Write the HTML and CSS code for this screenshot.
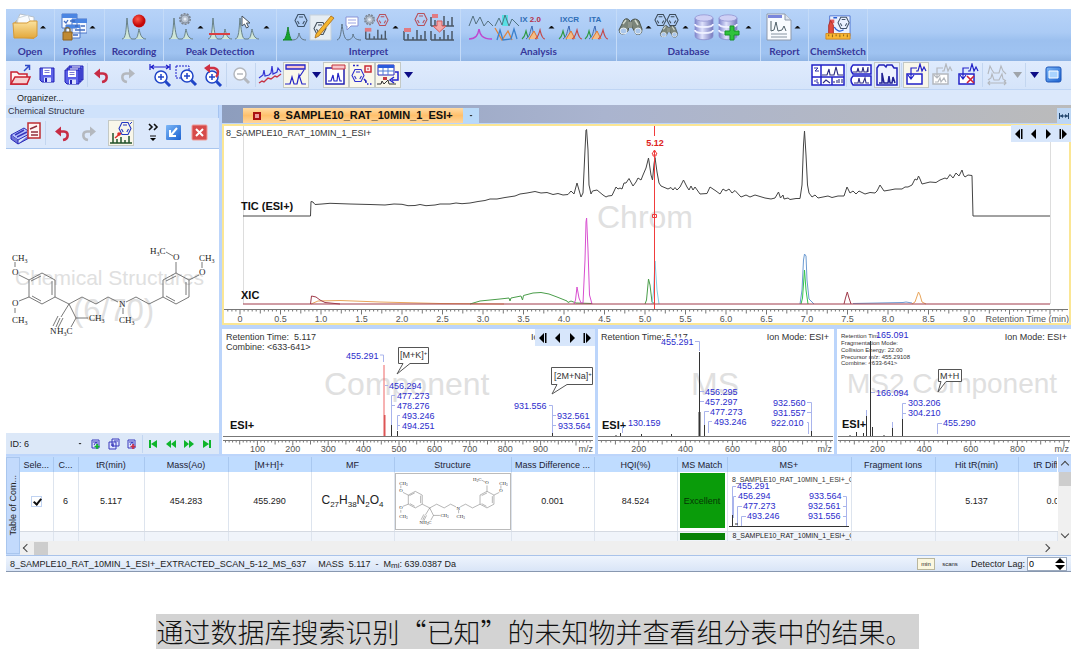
FILE: index.html
```html
<!DOCTYPE html>
<html lang="zh-CN">
<head>
<meta charset="utf-8">
<title>8_SAMPLE10_RAT_10MIN_1_ESI+</title>
<link rel="stylesheet" href="styles.css">
</head>
<body>
<svg class="sprite" aria-hidden="true">
  <defs>
    <linearGradient id="gFolder" x2="0" y2="1"><stop offset="0" stop-color="#fbe3a0"/><stop offset="1" stop-color="#e3a83c"/></linearGradient>
    <linearGradient id="gDb"><stop offset="0" stop-color="#7f85cc"/><stop offset=".4" stop-color="#dfe2fc"/><stop offset="1" stop-color="#7579bd"/></linearGradient>
    <radialGradient id="gRed" cx=".4" cy=".35"><stop offset="0" stop-color="#ff5a4a"/><stop offset="1" stop-color="#c40808"/></radialGradient>
    <linearGradient id="gBlue" x2="1" y2="1"><stop offset="0" stop-color="#7db8f8"/><stop offset="1" stop-color="#1c62d0"/></linearGradient>
    <g id="hex"><path d="M4 .5H10L13 6.500 10 12.500H4L1 6.500Z M5 3H9 M10.500 7L8.800 10 M3.500 7L5.200 10" fill="none" stroke="currentColor" stroke-width="1.100"/></g>
    <g id="gear"><circle cx="6" cy="6" r="5.200" fill="#aeb8c4" stroke="#7a8492" stroke-width="1.600" stroke-dasharray="2 1.200"/><circle cx="6" cy="6" r="4" fill="#b8c2d0" stroke="#8693a3"/><circle cx="6" cy="6" r="1.500" fill="#e6edf6"/></g>
    <g id="twopeaks"><path d="M0 24C4 24 4 14 5 3 6 14 7 24 10 24H13C16 23 16 18 17 14 18 18 19 24 24 24" fill="#cfe6d8" stroke="#5f777e" stroke-width=".9"/></g>
    <g id="bars"><path d="M1 11V2M1 11H24M5 11V5M10 11V8M14 11V1M18 11V6M22 11V2" fill="none" stroke="#4a5766" stroke-width="1.500"/></g>
    <g id="colorpeaks"><path d="M1 14C4 12 4 9 5 6 6 10 7 14 9 14" fill="none" stroke="#2f9a43" stroke-width="1.200"/><path d="M5 14C9 12 9 6 11 1 12 6 13 14 16 14" fill="#a9c4e8" stroke="#3a68b4"/><path d="M8 14L13 6 17 14" fill="#f3bd87" stroke="#e0762f"/><path d="M14 14C17 13 18 8 19 5 20 9 21 14 24 14" fill="none" stroke="#c2494a" stroke-width="1.200"/></g>
    <g id="binoc"><path d="M1 13L6 3Q9 0 12 4L10 14Q6 19 2 16Z M13 4Q17 0 21 4L24 12Q24 19 18 17L14 10Z" fill="#7b857a" stroke="#4c554f"/><path d="M10 5H14V11H10Z" fill="#8d958b"/><ellipse cx="5.500" cy="14" rx="3.500" ry="3" fill="#aac7ec" stroke="#e9eef0"/><ellipse cx="20" cy="14" rx="3.200" ry="3" fill="#aac7ec" stroke="#e9eef0"/><path d="M5 7L8 3M17 3L20 8" stroke="#d2d8cd" stroke-width="1.500"/></g>
    <g id="db"><path d="M1 4V22C1 27 19 27 19 22V4" fill="url(#gDb)" stroke="#8a8ecd" stroke-width=".8"/><ellipse cx="10" cy="4" rx="9" ry="3.200" fill="#cfd0f5" stroke="#9396d2" stroke-width=".8"/><path d="M1 10C1 14 19 14 19 10M1 16C1 20 19 20 19 16" fill="none" stroke="#eef0ff" stroke-width="2"/></g>
    <g id="lens"><circle cx="10" cy="10" r="6" fill="#fff" stroke="currentColor" stroke-width="1.500"/><path d="M14.500 14.500L19 19" stroke="currentColor" stroke-width="3"/><path d="M7 10H13" stroke="currentColor" stroke-width="1.500"/></g>
    <g id="undoarrow"><path d="M6 8.500H12C17 9 17 16 11 17" fill="none" stroke="currentColor" stroke-width="2.600"/><path d="M3 8.500L9 3.500V13.500Z" fill="currentColor"/></g>
    <g id="disk"><path d="M1 1H15V15H3L1 13Z" fill="#5c62e8" stroke="#2020b4"/><path d="M4 1.500H12V8H4Z" fill="#fff"/><path d="M5.500 3.500H10.500M5.500 5.500H10.500" stroke="#7c7cd4"/><path d="M5 10.500H12V15H5Z" fill="#dbe2ff"/><path d="M6 11H8V15H6Z" fill="#2323ae"/></g>
  </defs>
  <symbol id="i-folder" viewBox="0 0 26 28"><path d="M2 10V24L22 26 24 10 20 6H6Z" fill="#dc9e32"/><path d="M4 10L8 1 22 4 22 15Z" fill="#fff" stroke="#b3bfcc"/><path d="M6 5L16 2 20 14H5Z" fill="#f7fbff" stroke="#c9d3dd"/><path d="M1 10H15L18 8H25V23L22 25H2Z" fill="url(#gFolder)" stroke="#d59a39"/></symbol>
  <symbol id="i-profiles" viewBox="0 0 26 28"><path d="M1 1H16V15H1Z M11 6H26V20H11Z M5 12H19V25H5Z" fill="#f4f8ff" stroke="#4d77c8"/><path d="M1 1H16V5H1Z M11 6H26V10H11Z M5 12H19V15H5Z" fill="#4b85e2"/><path d="M3 8L5 10 7 7M9 8H14M14 13H17M20 13H24M14 17H24M12 22H17" fill="none" stroke="#406bc0" stroke-width="1.300"/><path d="M2 19H11V27H2Z" fill="#c08a32" stroke="#8d6220"/><path d="M4 19V16Q6.500 13 9 16V19" fill="none" stroke="#7e6b40" stroke-width="1.500"/></symbol>
  <symbol id="i-record" viewBox="0 0 26 28"><use href="#twopeaks" x="1" y="2"/><circle cx="18" cy="8" r="6.500" fill="url(#gRed)"/></symbol>
  <symbol id="i-peakgear" viewBox="0 0 26 28"><use href="#twopeaks" x="1" y="2"/><use href="#gear" x="11"/></symbol>
  <symbol id="i-peakbase" viewBox="0 0 26 28"><use href="#twopeaks" x="1" y="2"/><path d="M2 21H23" stroke="#d93f43" stroke-width="2"/></symbol>
  <symbol id="i-peakcursor" viewBox="0 0 26 28"><use href="#twopeaks" x="1" y="2"/><path d="M8 3V13L10.500 11 12.500 15 14.500 14 12.500 10H16Z" fill="#fff" stroke="#45505c"/></symbol>
  <symbol id="i-hexpeak" viewBox="0 0 26 28"><g color="#3e5268"><use href="#hex" x="12" y="1"/></g><path d="M1 27C4 26 5 20 6 14 7 20 8 26 10 27Z" fill="#15a42c" stroke="#168528"/><path d="M10 27C16 27 16 24 17 20 18 24 19 27 24 27" fill="none" stroke="#637783"/></symbol>
  <symbol id="i-edit" viewBox="0 0 26 28"><path d="M1 2H22V27H1Z" fill="#e6edf3" stroke="#c6d1db"/><g color="#45525e"><use href="#hex" x="4" y="9"/></g><path d="M7 21L22 3 25 5 10 23 6 25Z" fill="#f4b52d" stroke="#a66a19" stroke-width=".8"/></symbol>
  <symbol id="i-notepeak" viewBox="0 0 26 28"><path d="M10 4H22V13H15L11 17V13H10Z" fill="#fff" stroke="#8993d5"/><path d="M12 7H20M12 10H20" stroke="#9aa3e3"/><path d="M1 27C5 26 5 18 6 11 7 18 8 27 12 27 16 26 17 24 17 21 18 25 20 27 25 27" fill="none" stroke="#5e7384"/></symbol>
  <symbol id="i-gearhex" viewBox="0 0 28 28"><use href="#gear" x="1"/><g color="#b7505b"><use href="#hex" x="14" y="0"/></g><use href="#bars" x="2" y="16"/><path d="M2 15H9V19H2Z" fill="#e07b82"/></symbol>
  <symbol id="i-hexbars" viewBox="0 0 26 28"><g color="#b7505b"><use href="#hex" x="12" y="0"/></g><use href="#bars" x="1" y="16"/><path d="M2 15H9V19H2Z" fill="#e07b82"/></symbol>
  <symbol id="i-barsbars" viewBox="0 0 26 28"><use href="#bars" x="1" y="2"/><use href="#bars" x="1" y="16"/><path d="M3 1H9V5H3Z" fill="#e07b82"/><path d="M8 8H13V13H17L10.500 19 4 13H8Z" fill="#f3a8a8" stroke="#d7595b"/></symbol>
  <symbol id="i-an1" viewBox="0 0 26 28"><path d="M1 13L5 3 8 11 12 4 16 13 20 8 25 13" fill="none" stroke="#557080"/><path d="M1 26C8 26 10 22 11 16 12 22 14 26 24 26" fill="none" stroke="#bd48cf" stroke-width="1.500"/></symbol>
  <symbol id="i-an2" viewBox="0 0 26 28"><path d="M8 2H14V13H8Z" fill="#58e0e4"/><path d="M1 13L5 5 8 12 11 2 15 13 18 6 25 13" fill="none" stroke="#4f7582"/><path d="M1 15L8 27 14 18 18 27" fill="none" stroke="#e38438" stroke-width="1.300"/><path d="M3 27L6 17 9 27 17 26 20 16 23 26" fill="none" stroke="#3b80cc" stroke-width="1.300"/></symbol>
  <symbol id="i-binoc" viewBox="0 0 26 28"><use href="#binoc" x="1" y="4"/></symbol>
  <symbol id="i-hexbinoc" viewBox="0 0 28 28"><g color="#3b4957"><use href="#hex" x="0"/><use href="#hex" x="13"/></g><g transform="translate(6 11) scale(.8)"><use href="#binoc"/></g></symbol>
  <symbol id="i-db" viewBox="0 0 24 28"><use href="#db" x="2" y="1"/></symbol>
  <symbol id="i-dbadd" viewBox="0 0 26 28"><use href="#db" x="1" y="1"/><path d="M13 13H17V18H22V22H17V27H13V22H8V18H13Z" fill="#2fc33b" stroke="#16912a"/></symbol>
  <symbol id="i-report" viewBox="0 0 26 28"><path d="M1 1H19L25 7V27H1Z" fill="#f8fbff" stroke="#8e99ab"/><path d="M2 2H16V5H2Z" fill="#7a86dc"/><path d="M19 1V7H25" fill="#dbe3ee" stroke="#8e99ab"/><path d="M5 18V8M5 18L8 17 10 9 12 18 16 17 18 13 20 18" fill="none" stroke="#50616a"/><path d="M5 21H21M5 24H21" stroke="#bfc7d0" stroke-width="2"/></symbol>
  <symbol id="i-sketch" viewBox="0 0 28 28"><path d="M5 2H27V24H5Z" fill="#eaf1ff" stroke="#4e75d2"/><g color="#42536a"><use href="#hex" x="13" y="3"/></g><path d="M9 4H13M10 14Q14 21 20 17" fill="none" stroke="#275cd2" stroke-width="1.500"/><path d="M5 6H10V10H5Z" fill="#e45558"/><path d="M4 12L6 7 9 12V25H4Z" fill="#e14b40" stroke="#aa2c28"/><path d="M1 21H27V27H1Z" fill="#f8b732" stroke="#d18824"/><path d="M4 22V24M8 22V25M12 22V24M16 22V25M20 22V24M24 22V25" stroke="#845b1b"/></symbol>

  <symbol id="t-open" viewBox="0 0 24 24"><path d="M2 21V9H8L10 11H18V21Z" fill="#fff1f0" stroke="#ca2030" stroke-width="1.500"/><path d="M2 21L6 14H21L18 21Z" fill="#f6d1d3" stroke="#ca2030" stroke-width="1.500"/><path d="M15 8L20 3M16 2.500H20.500V7" fill="none" stroke="#2f4bc8" stroke-width="1.500"/></symbol>
  <symbol id="t-save" viewBox="0 0 24 24"><use href="#disk" x="4" y="4"/></symbol>
  <symbol id="t-saveall" viewBox="0 0 24 24"><use href="#disk" x="7" y="2"/><use href="#disk" x="5" y="4"/><use href="#disk" x="3" y="6"/></symbol>
  <symbol id="t-undo" viewBox="0 0 24 24"><use href="#undoarrow" x="1" y="2"/></symbol>
  <symbol id="t-redo" viewBox="0 0 24 24"><g transform="translate(22 2) scale(-1 1)"><use href="#undoarrow"/></g></symbol>
  <symbol id="t-zoomx" viewBox="0 0 24 24"><path d="M2 1V7M22 1V7M3 4H21M6 2L3 4 6 6M18 2L21 4 18 6" fill="none" stroke="#1e1ecb" stroke-width="1.200"/><g color="#1f45c7"><use href="#lens" x="3" y="4"/></g><path d="M13 11V17" stroke="#1f45c7" stroke-width="1.500"/></symbol>
  <symbol id="t-zoombox" viewBox="0 0 24 24"><path d="M2 3H15V15H2Z" fill="none" stroke="#1e1ecb" stroke-dasharray="2 1"/><g color="#1f45c7"><use href="#lens" x="3" y="3"/></g><path d="M13 10V16" stroke="#1f45c7" stroke-width="1.500"/></symbol>
  <symbol id="t-zoomundo" viewBox="0 0 24 24"><g color="#1f45c7"><use href="#lens" x="2" y="4"/></g><path d="M12 11V17" stroke="#1f45c7" stroke-width="1.500"/><path d="M9 5H14C19 6 19 11 16 14" fill="none" stroke="#cf3143" stroke-width="2.400"/><path d="M4 5L10 1V10Z" fill="#cf3143"/></symbol>
  <symbol id="t-zoomout" viewBox="0 0 24 24"><use href="#lens" x="1" y="1"/></symbol>
  <symbol id="t-lines" viewBox="0 0 24 24"><path d="M1 15L5 12 6 7 7 13 11 12 13 10 14 3 15 11 19 9 20 5 23 9" fill="none" stroke="#3434d4" stroke-width="1.200"/><path d="M1 20L4 18 6 19 10 15 13 16 17 13 19 14 23 11" fill="none" stroke="#c63245" stroke-width="1.400"/></symbol>
  <symbol id="t-label" viewBox="0 0 24 24"><path d="M2 2H21V6H2Z" fill="#f7c6cb" stroke="#2525c7" stroke-width="1.300"/><path d="M20 7L16 13M1 21H6L8 14 10 21H13L15 12 18 21H22" fill="none" stroke="#2525c7" stroke-width="1.200"/></symbol>
  <symbol id="t-panel" viewBox="0 0 24 24"><path d="M2 5H20V21H2Z" fill="#fff" stroke="#2222b2" stroke-width="1.500"/><path d="M8 2H21V6H8Z" fill="#f7c6cb" stroke="#c2333f"/><path d="M4 18H7L9 12 10 18H13L14 10 16 18H18" fill="none" stroke="#2525c7" stroke-width="1.200"/></symbol>
  <symbol id="t-hex" viewBox="0 0 24 24"><g color="#2f2fd0"><use href="#hex" x="1" y="6"/></g><path d="M3 2.500H5M6.500 2.500H8.500M14 16L16 18V20M17 21H18.500M20 21H21.500" stroke="#2525c7" stroke-width="1.500"/><path d="M15 3H21V9H15Z" fill="#fbe8e8" stroke="#c92b36" stroke-width="1.500"/><path d="M17 6H19" stroke="#c92b36"/></symbol>
  <symbol id="t-table" viewBox="0 0 24 24"><path d="M2 2H18V12H2Z" fill="#fff" stroke="#2828bb"/><path d="M2 2H18V5H2Z" fill="#2a5bdc"/><path d="M2 8H18M7 5V12M12 5V12" stroke="#4f7cd7"/><path d="M19 9H22V17H16M18 14L14 17 18 20" fill="none" stroke="#2222d0" stroke-width="1.500"/><path d="M7 14H11V17H7Z" fill="#c83d44"/><path d="M1 21H5L6 18 8 21 12 17 13 21H20" fill="none" stroke="#333"/></symbol>
  <symbol id="t-layout" viewBox="0 0 34 24"><path d="M1 2H33V22H1Z M1 14H33M10 2V22M21 14V22" fill="#fff" stroke="#2222c8" stroke-width="1.500"/><path d="M3 5H7L4 8H8M3 18H5M6 16V20H8" fill="none" stroke="#3030a8"/><path d="M11 12H16L18 6 19 12H23L25 4 27 12H32M12 20L15 17 19 20M23 20V18M26 20V17M28 20V16M31 20V16" fill="none" stroke="#2c2c80" stroke-width="1.100"/></symbol>
  <symbol id="t-stack" viewBox="0 0 24 24"><path d="M4 2H22V11H4Q0 6 4 2Z M4 13H22V22H4Q0 17 4 13Z" fill="#fff" stroke="#2222c8" stroke-width="1.500"/><path d="M4 9H8L9 5 10 9H13L14 4 15 9H18L19 4V9M5 20H9L10 15 11 20H14L16 15 17 20H20" fill="none" stroke="#2c2c80" stroke-width="1.100"/></symbol>
  <symbol id="t-tabs" viewBox="0 0 24 24"><path d="M2 5L4 2H9L11 4 12 2H17L19 5H22V22H2Z" fill="#eef2ff" stroke="#2222b8" stroke-width="1.500"/><path d="M4 20H7V10L9 20H13L14 13 15 20H17L18 14 20 20" fill="none" stroke="#222294" stroke-width="1.500"/></symbol>
  <symbol id="t-addpk" viewBox="0 0 24 24"><path d="M3 11H18V21H3Z" fill="#fff" stroke="currentColor" stroke-width="1.500"/><path d="M13 5H7V15M4 12L7 16 10 12M12 8H14L16 1 18 8 20 4 22 8" fill="none" stroke="currentColor" stroke-width="1.200"/></symbol>
  <symbol id="t-addpk2" viewBox="0 0 24 24"><path d="M3 11H18V21H3Z" fill="#fff" stroke="currentColor" stroke-width="1.500"/><path d="M13 5H7V14M4 12L7 15 10 12M12 8H14L16 1 18 8 20 4 22 8M5 19H8L10 15 11 19 14 15 16 19" fill="none" stroke="currentColor" stroke-width="1.200"/></symbol>
  <symbol id="t-delpk" viewBox="0 0 24 24"><use href="#t-addpk" width="24" height="24"/><path d="M11 13L18 20M18 13L11 20" stroke="#d02337" stroke-width="1.600"/></symbol>
  <symbol id="t-range" viewBox="0 0 24 24"><path d="M3 11L5 3 7 7 9 10 14 10 16 3 18 8 21 11M3 17L6 15 7 11 9 17H14L17 11 18 16 21 18M3 20H21M5 18L3 20 5 22M19 18L21 20 19 22" fill="none" stroke="currentColor" stroke-width="1.100"/></symbol>
  <symbol id="t-window" viewBox="0 0 24 24"><rect x="4" y="4" width="15" height="15" rx="2" fill="url(#gBlue)" stroke="#1b55b8"/><path d="M7 8H16V15H7Z" fill="#a9d4ff" stroke="#fff"/></symbol>
  <symbol id="t-report" viewBox="0 0 32 24"><path d="M1 14L14 7 21 12 8 19Z" fill="#b9c4ff" stroke="#2929b8"/><path d="M1 14V18L8 23V19M8 23L21 16V12" fill="#7075d7" stroke="#2929b8"/><path d="M5 14L14 9M7 16L17 11" stroke="#3838bb" stroke-width="1.500"/><path d="M18 2H30V17H18Z" fill="#fff4f3" stroke="#be2c32" stroke-width="1.500"/><path d="M20 8L27 5M21 11H28M21 14H28" stroke="#912e3c" stroke-width="1.500"/></symbol>
  <symbol id="t-struct" viewBox="0 0 24 24"><g color="#2437c2"><use href="#hex" x="9" y="1"/></g><path d="M21 3L23 1" stroke="#2437c2"/><path d="M12 12L6 17" stroke="#df2e29" stroke-width="1.500"/><circle cx="10" cy="13" r="1.800" fill="#df2e29"/><path d="M1 22H23M4 22V12M8 22V18M12 22V16M16 22V19M20 22V15" stroke="#22532a" stroke-width="1.500"/></symbol>
  <symbol id="t-more" viewBox="0 0 14 24"><path d="M3 3L6 6 3 9M8 3L11 6 8 9" fill="none" stroke="#111" stroke-width="1.600"/><path d="M4 15H10" stroke="#111"/><path d="M4 17H10L7 20Z"/></symbol>
  <symbol id="t-dock" viewBox="0 0 20 20"><rect x="2" y="2" width="15" height="15" rx="1" fill="url(#gBlue)"/><path d="M13 5L7 12M6 7V13H12" fill="none" stroke="#fff" stroke-width="2"/></symbol>
  <symbol id="t-close" viewBox="0 0 20 20"><rect x="2" y="2" width="15" height="15" rx="1" fill="#d64b4b" stroke="#ef9b98"/><path d="M6 6L13 13M13 6L6 13" stroke="#fff" stroke-width="2"/></symbol>
  <symbol id="f-rec" viewBox="0 0 12 12"><path d="M2 2H9V10H2Z" fill="#dfe6ff" stroke="#3838bb"/><path d="M3 4H8M4 7L6 4 8 7" fill="none" stroke="#3838bb"/><path d="M7 6V11M4.500 8.500H9.500" stroke="currentColor" stroke-width="1.700"/></symbol>
  <symbol id="f-recs" viewBox="0 0 12 12"><path d="M4 1H11V8H4Z M1 4H8V11H1Z" fill="#dfe6ff" stroke="#3838bb"/><path d="M3 7H6M5 5V9M6 3H10" stroke="#3838bb"/></symbol>
  <symbol id="n-first" viewBox="0 0 12 12"><path d="M2 2H4V10H2Z M4 6L10 2V10Z" fill="currentColor"/></symbol>
  <symbol id="n-back" viewBox="0 0 12 12"><path d="M1 6L6 2V10Z M6 6L11 2V10Z" fill="currentColor"/></symbol>
  <symbol id="n-fwd" viewBox="0 0 12 12"><path d="M11 6L6 2V10Z M6 6L1 2V10Z" fill="currentColor"/></symbol>
  <symbol id="n-last" viewBox="0 0 12 12"><path d="M8 2H10V10H8Z M8 6L2 2V10Z" fill="currentColor"/></symbol>
  <symbol id="c-first" viewBox="0 0 12 12"><path d="M2 6L7 1V11Z M8 1H9.500V11H8Z"/></symbol>
  <symbol id="c-prev" viewBox="0 0 12 12"><path d="M3 6L8 1V11Z"/></symbol>
  <symbol id="c-next" viewBox="0 0 12 12"><path d="M9 6L4 1V11Z"/></symbol>
  <symbol id="c-last" viewBox="0 0 12 12"><path d="M10 6L5 1V11Z M2.500 1H4V11H2.500Z"/></symbol>
</svg>

<main class="app">
  <nav class="ribbon" aria-label="Ribbon">
    <section class="group g-open"><div class="icons"><button aria-label="Open"><svg><use href="#i-folder"/></svg></button><i class="up"></i></div><span>Open</span></section>
    <section class="group g-profiles"><div class="icons"><button aria-label="Profiles"><svg><use href="#i-profiles"/></svg></button><i class="up"></i></div><span>Profiles</span></section>
    <section class="group g-record"><div class="icons"><button aria-label="Recording"><svg><use href="#i-record"/></svg></button></div><span>Recording</span></section>
    <section class="group g-peak"><div class="icons"><button aria-label="Peak options"><svg><use href="#i-peakgear"/></svg></button><i class="up"></i><button aria-label="Peak baseline"><svg><use href="#i-peakbase"/></svg></button><button aria-label="Pick peak"><svg><use href="#i-peakcursor"/></svg></button><i class="up"></i></div><span>Peak Detection</span></section>
    <section class="group g-interpret"><div class="icons"><button aria-label="Structure peak"><svg><use href="#i-hexpeak"/></svg></button><button aria-label="Edit structure"><svg><use href="#i-edit"/></svg></button><button aria-label="Annotate"><svg><use href="#i-notepeak"/></svg></button><button aria-label="Assign"><svg><use href="#i-gearhex"/></svg></button><i class="up"></i><button aria-label="Fragments"><svg><use href="#i-hexbars"/></svg></button><button aria-label="Compare"><svg><use href="#i-barsbars"/></svg></button></div><span>Interpret</span></section>
    <section class="group g-analysis"><div class="icons"><button aria-label="Extract"><svg><use href="#i-an1"/></svg></button><button aria-label="Deconvolve"><svg><use href="#i-an2"/></svg></button><button aria-label="IX 2.0"><svg viewBox="0 0 26 28"><text x="0" y="9" class="ico-text">IX <tspan fill="#b42f4b">2.0</tspan></text><use href="#colorpeaks" x="1" y="12"/></svg></button><i class="up"></i><button aria-label="IXCR"><svg viewBox="0 0 26 28"><text x="3" y="9" class="ico-text">IXCR</text><use href="#colorpeaks" x="1" y="12"/></svg></button><button aria-label="ITA"><svg viewBox="0 0 26 28"><text x="6" y="9" class="ico-text">ITA</text><use href="#colorpeaks" x="1" y="12"/></svg></button></div><span>Analysis</span></section>
    <section class="group g-database"><div class="icons"><button aria-label="Search"><svg><use href="#i-binoc"/></svg></button><i class="up"></i><button aria-label="Structure search"><svg><use href="#i-hexbinoc"/></svg></button><i class="up"></i><button aria-label="Database"><svg><use href="#i-db"/></svg></button><button aria-label="Add to database"><svg><use href="#i-dbadd"/></svg></button><i class="up"></i></div><span>Database</span></section>
    <section class="group g-report"><div class="icons"><button aria-label="Report"><svg><use href="#i-report"/></svg></button><i class="up"></i></div><span>Report</span></section>
    <section class="group g-sketch"><div class="icons"><button aria-label="ChemSketch"><svg><use href="#i-sketch"/></svg></button></div><span>ChemSketch</span></section>
  </nav>

  <div class="toolbar">
    <button aria-label="Open file"><svg><use href="#t-open"/></svg></button><button aria-label="Save"><svg><use href="#t-save"/></svg></button><button aria-label="Save all"><svg><use href="#t-saveall"/></svg></button><i class="sep"></i>
    <button class="red" aria-label="Undo"><svg><use href="#t-undo"/></svg></button><button class="gray" aria-label="Redo"><svg><use href="#t-redo"/></svg></button><i class="space"></i>
    <button aria-label="Zoom X"><svg><use href="#t-zoomx"/></svg></button><button aria-label="Zoom box"><svg><use href="#t-zoombox"/></svg></button><button aria-label="Undo zoom"><svg><use href="#t-zoomundo"/></svg></button><i class="sep"></i>
    <button class="gray" aria-label="Zoom out"><svg><use href="#t-zoomout"/></svg></button><i class="sep"></i>
    <button aria-label="Overlay"><svg><use href="#t-lines"/></svg></button><button class="on" aria-label="Labels"><svg><use href="#t-label"/></svg></button><i class="down"></i>
    <button class="on" aria-label="Panel"><svg><use href="#t-panel"/></svg></button><button class="on" aria-label="Structures"><svg><use href="#t-hex"/></svg></button><button class="on" aria-label="Table link"><svg><use href="#t-table"/></svg></button><i class="down"></i>
    <i class="fill"></i>
    <button class="wide" aria-label="Layout"><svg><use href="#t-layout"/></svg></button><i class="sep"></i>
    <button aria-label="Stack"><svg><use href="#t-stack"/></svg></button><button class="on pale" aria-label="Tabs"><svg><use href="#t-tabs"/></svg></button><i class="sep"></i>
    <button class="on blue" aria-label="Add peak"><svg><use href="#t-addpk"/></svg></button><button class="gray" aria-label="Add spectrum"><svg><use href="#t-addpk2"/></svg></button><button class="blue" aria-label="Delete peak"><svg><use href="#t-delpk"/></svg></button><i class="sep"></i>
    <button class="gray" aria-label="Range"><svg><use href="#t-range"/></svg></button><i class="down off"></i><i class="sep"></i><i class="down"></i><button aria-label="Window"><svg><use href="#t-window"/></svg></button>
  </div>
  <div class="organizer">Organizer...</div>

  <div class="work">
    <aside class="left">
      <h2 class="panel-title">Chemical Structure</h2>
      <div class="struct-tools">
        <button class="wide" aria-label="Report structure"><svg><use href="#t-report"/></svg></button><i class="sep"></i>
        <button class="red" aria-label="Undo structure"><svg><use href="#t-undo"/></svg></button><button class="gray" aria-label="Redo structure"><svg><use href="#t-redo"/></svg></button><i class="space"></i>
        <button class="on" aria-label="Structure to peak"><svg><use href="#t-struct"/></svg></button><i class="fill"></i>
        <button class="narrow" aria-label="More"><svg><use href="#t-more"/></svg></button><button aria-label="Dock"><svg class="s20"><use href="#t-dock"/></svg></button><button aria-label="Close"><svg class="s20"><use href="#t-close"/></svg></button>
      </div>
      <svg class="plot" viewBox="6 149 213 284" role="img" aria-label="Chemical structure">
        <text class="mark" x="15" y="285" font-size="21">Chemical Structures</text>
        <text class="mark" x="73" y="321" font-size="31">(6/70)</text>
        <g id="molecule">
          <path fill="none" stroke="#555" stroke-width=".8" d="M42 273L55 280 55 297 42 304 29 297 29 280ZM41 276L31 281M52 281V295M41 301L32 296M29 280L19 275M15 267V262M29 297L19 301M15 308V313M55 297L69 304 82 297 96 304 108 297 118 302M123 308V314M126 302L136 297 149 304 163 297M69 304L76 318 88 318M76 318L71 327M69 304L61 317M58 316L53 326M60 318L56 327M63 318L58 328M163 280L176 273 189 280 189 297 176 304 163 297ZM166 281L176 276M186 282V295M175 301L166 296M176 273V262M173 256L166 252M189 280L199 275M202 268V262"/>
          <g class="atoms">
            <text x="12" y="261">CH<tspan class="sub" dy="2">3</tspan></text><text x="12" y="275">O</text><text x="12" y="306">O</text><text x="12" y="323">CH<tspan class="sub" dy="2">3</tspan></text>
            <text x="119" y="307">N</text><text x="119" y="323">CH<tspan class="sub" dy="2">3</tspan></text>
            <text x="89" y="321">CH<tspan class="sub" dy="2">3</tspan></text><text x="50" y="334">N</text><text x="57" y="334">H<tspan class="sub" dy="2">3</tspan><tspan dy="-2">C</tspan></text>
            <text x="150" y="254">H<tspan class="sub" dy="2">3</tspan><tspan dy="-2">C</tspan></text><text x="173" y="260">O</text><text x="199" y="261">CH<tspan class="sub" dy="2">3</tspan></text><text x="199" y="275">O</text>
          </g>
        </g>
      </svg>
      <div class="pager">
        <label class="record">ID: <select aria-label="Record"><option>6</option></select></label><i class="mini"></i>
        <button class="green" aria-label="Add record"><svg><use href="#f-rec"/></svg></button><button aria-label="Records"><svg><use href="#f-recs"/></svg></button><button class="red" aria-label="Remove record"><svg><use href="#f-rec"/></svg></button><i class="sep"></i>
        <button class="green" aria-label="First"><svg><use href="#n-first"/></svg></button><button class="green" aria-label="Back"><svg><use href="#n-back"/></svg></button><button class="green" aria-label="Forward"><svg><use href="#n-fwd"/></svg></button><button class="green" aria-label="Last"><svg><use href="#n-last"/></svg></button>
      </div>
    </aside>

    <section class="right">
      <div class="tabs">
        <button class="tab"><i class="tab-ico"></i>8_SAMPLE10_RAT_10MIN_1_ESI+</button><button class="tab-menu" aria-label="Tab list"><i class="mini"></i></button>
        <i class="fill"></i>
        <button class="fit" aria-label="Fit"><svg viewBox="0 0 14 14"><path d="M2.500 4V10M11.500 4V10M3 7H11" fill="none" stroke="#23466e"/><path d="M3 7L6 5V9ZM11 7L8 5V9Z" fill="#23466e"/></svg></button>
      </div>
      <div class="chrom">
        <svg class="plot" viewBox="224 126 845 197" role="img" aria-label="Chromatogram">
          <text class="mark" x="597" y="228" font-size="32">Chrom</text>
          <path d="M243.500 126V304M1050.500 126V304" stroke="#ddd" fill="none"/>
          <text x="226" y="136">8_SAMPLE10_RAT_10MIN_1_ESI+</text>
          <g class="trace">
            <path stroke="#444" d="M243 216H310.500L311 201.500 313 202 315 204.500 322 204 330 203.300 350 204 370 204.500 385 205 394 204 402 204.300 408 205.700 415 205.500 420 204.500 426 205.700 435 205 440 204 450 204 456 203 462 203.700 470 203 478 201.500 485 200.500 490 199 497 199 505 197.500 515 196 520 194 527 193 535 191.500 541 193 547 192.500 553 194.500 558 193.500 563 195 568 194.500 571 191 574 194 577 183 579 190 581 197 583 193 585 150 586 130 586.600 129.500 588 150 589 185 591 194 592.500 191 597 190 603 195 606 197 608 196 612 195.500 616 187 618 189 620 188 622 189 624 183 626 183 629 178.500 633 186 636 182 638 178 641 180 643 175 646 168 648.500 158 651 175 652.500 180 654 164 655 157.500 657 172 659 183 661 186 668 189 671 187.500 673 190 675 187.500 677 190 680 187 683.500 180 687 187 689 190 691 186 693 190 695 187 700 194 707 193.500 710 187 716 191 720 194 723 189 726 191 729 189 732 193 735 190.500 741 197 746 195 750 197 755 195 765 198 771 199 775 198 778.500 192 780.500 198 783 195 784 199 788 198 790 199.500 796 198.500 800 198.500 802 185 803.500 145 804.500 131 806 155 807.500 185 809 193 812 197 815 195 818 198 828 196 832 197.500 838 196 844 196 847 187 850 193 853 191 856 194 859 191 865 194 870 192.500 875 193 877 191 880 185 884 191 890 190 895 189 902 189 905 187 908 187 912 185 915 179 917 180 918.500 176 920 179 922 184 930 182 936 182.500 940 180 945 178 947 179 950 174.500 953 178 956 173 959 176 962 170 963.500 175 965 177 968 175 972 175.500 973 216H1050"/>
            <path stroke="#e9a55a" d="M311 304L318 301 340 300.500 380 302 440 303.500 504 304M912 304L915 302 918.500 292 920 295 922 302 926 304"/>
            <path stroke="#4a9d4a" d="M470 304L480 301 500 299 509 298 510 301 511 298 521 296 522.500 300 523.500 295.500 533 293 541 292.500 549 294 557 297 567 301 568 302.500 571 301 576 303 592 303.500M645 304L646.500 300 648.500 279 650 285 652 302 655 304"/>
            <path stroke="#d84fd0" d="M574 304L575.500 300 577 287 579 298 581 303H583L585 260 586 222 586.600 218 588 250 589.500 295 592 304"/>
            <path stroke="#86cde4" d="M652 304L653.500 292 655 261 657 290 659 304"/>
            <path stroke="#6c9bd2" d="M800 304L802 290 803.500 260 804.500 254 806 256 807 280 809 299 814 304M853 303.500L903 302.500 906 302 912 303"/>
            <path stroke="#31c44d" d="M801 304L802.500 298 804.500 270 806 290 808 304"/>
            <path stroke="#a03a4a" d="M243 304H1050M310.500 304L311.500 296 316 297 320 300 325 302.500 340 304M844 304L845.500 298 847.300 292 849 298 851 304"/>
          </g>
          <g class="axis" data-axis="chrom"></g>
          <path class="cursor" d="M654.500 126V136M654.500 150V309"/>
          <path class="cursor" d="M654.500 150L657 154H656V156H653V154H652ZM652.500 214.500H656.500V217.500H652.500Z"/>
          <text class="red-label" x="655" y="146" text-anchor="middle">5.12</text>
          <text class="bold" x="241" y="210">TIC (ESI+)</text><text class="bold" x="241" y="299">XIC</text>
          <text class="scale" x="1069" y="322" text-anchor="end">Retention Time (min)</text>
        </svg>
        <div class="steps"><button aria-label="First peak"><svg><use href="#c-first"/></svg></button><button aria-label="Previous peak"><svg><use href="#c-prev"/></svg></button><button aria-label="Next peak"><svg><use href="#c-next"/></svg></button><button aria-label="Last peak"><svg><use href="#c-last"/></svg></button></div>
      </div>

      <div class="spectra">
        <div class="spectrum">
          <svg class="plot" viewBox="222 329 373 125" role="img" aria-label="Component spectrum">
            <text class="mark" x="324" y="395" font-size="32">Component</text>
            <text x="226" y="340">Retention Time:&#160; 5.117</text><text x="226" y="350">Combine: &lt;633-641&gt;</text><text x="531" y="340">Ion</text>
            <text class="bold" x="230" y="429">ESI+</text>
            <g class="leader"><path d="M380 355H383.500V362M385 385.500H388M391.500 433V395.500H395M391.500 405.500H395M397.500 430V415.500H400M397.500 425.500H400M549 405.500H552.500V433M552 415.500H556M552 425.500H556"/></g>
            <path d="M384 365V415" stroke="#e66"/><path d="M384.500 415V436" stroke="#d55" stroke-width="2"/><path d="M391.500 425V436M397.500 431V436M552.500 433V436" stroke="#333"/>
            <g class="peak"><text x="346" y="359">455.291</text><text x="389" y="389">456.294</text><text x="397" y="399">477.273</text><text x="397" y="409">478.276</text><text x="402" y="419">493.246</text><text x="402" y="429">494.251</text><text x="514" y="409">931.556</text><text x="557" y="419">932.561</text><text x="558" y="429">933.564</text></g>
            <g class="callout"><path d="M398.500 347.500H428.500V363.500H410L397 374 403 363.500H398.500Z"/><path d="M551.500 367.500H592.500V384.500H567L552 394 557 384.500H551.500Z"/></g>
            <text x="400" y="358">[M+K]<tspan class="sub" dy="-3">+</tspan></text><text x="554" y="379">[2M+Na]<tspan class="sub" dy="-3">+</tspan></text>
            <g class="axis" data-axis="component"></g><text class="scale" x="593" y="452" text-anchor="end">m/z</text>
          </svg>
          <div class="steps"><button aria-label="First component"><svg><use href="#c-first"/></svg></button><button aria-label="Previous component"><svg><use href="#c-prev"/></svg></button><button aria-label="Next component"><svg><use href="#c-next"/></svg></button><button aria-label="Last component"><svg><use href="#c-last"/></svg></button></div>
        </div>
        <div class="spectrum">
          <svg class="plot" viewBox="598 329 236 125" role="img" aria-label="MS spectrum">
            <text class="mark" x="691" y="395" font-size="32">MS</text>
            <text x="601" y="340">Retention Time:</text><text x="666" y="340">5.117</text><path d="M663 337.500H694V346H663Z" fill="#fff"/><text x="829" y="340" text-anchor="end">Ion Mode: ESI+</text>
            <text class="bold" x="602" y="429">ESI+</text>
            <g class="leader"><path d="M695 341.500H699.500V351M700 391.500H704M700 401.500H704M704.500 430V411.500H709M708.500 433V421.500H712M807 402.500H811.500V434M807 412.500H811M807 422.500H808.500V434M622.500 433V426"/></g>
            <path d="M699.500 352V436M704.500 425V436M811.500 431V436M620.500 433V436M616 435V436M641.500 434V436M671.500 434V436" stroke="#333"/><path d="M699.500 412V436" stroke="#333" stroke-width="2"/>
            <g class="peak"><text x="661" y="345">455.291</text><text x="705" y="395">456.295</text><text x="705" y="405">457.297</text><text x="710" y="415">477.273</text><text x="714" y="425">493.246</text><text x="773" y="406">932.560</text><text x="773" y="416">931.557</text><text x="771" y="426">922.010</text><text x="628" y="426">130.159</text></g>
            <g class="axis" data-axis="ms"></g><text class="scale" x="832" y="452" text-anchor="end">m/z</text>
          </svg>
        </div>
        <div class="spectrum">
          <svg class="plot" viewBox="837 329 234 125" role="img" aria-label="MS2 component spectrum">
            <text class="mark" x="847" y="393" font-size="28">MS2 Component</text>
            <g class="tiny"><text x="841" y="338">Retention Tim</text><text x="841" y="345">Fragmentation Mode:</text><text x="841" y="352">Collision Energy: 22.00</text><text x="841" y="359">Precursor m/z: 455.29108</text><text x="841" y="365">Combine: &lt;633-641&gt;</text></g>
            <text x="1067" y="340" text-anchor="end">Ion Mode: ESI+</text><text class="bold" x="842" y="428">ESI+</text>
            <g class="leader"><path d="M871 392.500H875M902.500 420V403.500H906M902.500 413.500H906M937.500 434V423.500H942M892.500 430V422M866.500 416V410"/></g>
            <path d="M870.500 341V436M866.500 416V436M892.500 428V436M902.500 419V436M856.500 432V436M863.500 433V436M850 435V436M884 435V436M872.500 427V436" stroke="#333"/>
            <g class="peak"><text x="876" y="338">165.091</text><text x="876" y="396">166.094</text><text x="908" y="406">303.206</text><text x="908" y="416">304.210</text><text x="943" y="426">455.290</text></g>
            <g class="callout"><path d="M938.500 369.500H961.500V381.500H946L938 392 941 381.500H938.500Z"/></g><text x="940" y="379">M+H</text>
            <g class="axis" data-axis="ms2"></g><text class="scale" x="1069" y="452" text-anchor="end">m/z</text>
          </svg>
        </div>
      </div>
    </section>
  </div>

  <section class="components">
    <h2 class="side"><span>Table of Com...</span></h2>
    <div class="grid-wrap">
      <div class="grid-view">
        <table>
          <colgroup><col class="w33"><col class="w25"><col class="w66"><col class="w84"><col class="w83"><col class="w83"><col class="w117"><col class="w83"><col class="w83"><col class="w50"><col class="w124"><col class="w84"><col class="w83"><col class="w39"></colgroup>
          <thead><tr><th>Sele...</th><th>C...</th><th>tR(min)</th><th>Mass(Ao)</th><th>[M+H]+</th><th>MF</th><th>Structure</th><th>Mass Difference ...</th><th>HQI(%)</th><th>MS Match</th><th>MS+</th><th>Fragment Ions</th><th>Hit tR(min)</th><th class="cut">tR Diff</th></tr></thead>
          <tbody>
            <tr><td><input type="checkbox" checked aria-label="Select component 6"></td><td>6</td><td>5.117</td><td>454.283</td><td>455.290</td><td class="formula">C<sub>27</sub>H<sub>38</sub>N<sub>2</sub>O<sub>4</sub></td><td class="thumb"><svg viewBox="6 245 213 94"><use href="#molecule"/></svg></td><td>0.001</td><td>84.524</td><td class="match"><span>Excellent</span></td>
              <td class="ms"><svg class="plot" viewBox="728 474 123 57" role="img" aria-label="MS+ preview"><text class="head" x="732" y="484">8_SAMPLE10_RAT_10MIN_1_ESI+_C</text><g class="leader"><path d="M736 488.500H732.500V528M736 498.500H733.500V520M742 508.500H737.500V528M746 518.500H741.500V528M843 498.500H846.500V528M843 508.500H846M843 518.500H846"/></g><path d="M729 528.500H849M732.500 517V528M735 526H738" stroke="#333" fill="none"/><g class="peak"><text x="737" y="491">455.291</text><text x="738" y="501">456.294</text><text x="743" y="511">477.273</text><text x="747" y="521">493.246</text><text x="809" y="501">933.564</text><text x="808" y="511">932.561</text><text x="808" y="521">931.556</text></g></svg></td>
              <td></td><td>5.137</td><td class="cut far">0.0</td></tr>
            <tr class="next"><td></td><td></td><td></td><td></td><td></td><td></td><td></td><td></td><td></td><td class="match"><span></span></td><td class="peek">8_SAMPLE10_RAT_10MIN_1_ESI+_C</td><td></td><td></td><td></td></tr>
          </tbody>
        </table>
        <div class="vbar"><i class="chev up-chev"></i><i class="thumb-v"></i><i class="fill"></i><i class="chev down-chev"></i></div>
      </div>
      <div class="hbar"><i class="chev left-chev"></i><i class="thumb-h"></i><i class="fill"></i><i class="chev right-chev"></i></div>
    </div>
  </section>

  <footer class="status">
    <span>8_SAMPLE10_RAT_10MIN_1_ESI+_EXTRACTED_SCAN_5-12_MS_637</span><span>MASS&#160; 5.117&#160; -&#160; M<sub>mi</sub>: 639.0387 Da</span><i class="fill"></i>
    <button class="unit active">min</button><button class="unit">scans</button>
    <label for="lag">Detector Lag:</label><span class="spin"><input id="lag" value="0"><svg viewBox="0 0 10 12"><path d="M0 5L5 0 10 5ZM0 7H10L5 12Z"/></svg></span>
  </footer>
</main>
<p class="caption"><span>通过数据库搜索识别“已知”的未知物并查看组分表中的结果。</span></p>
<script src="axes.js"></script>
</body>
</html>
```
FILE: styles.css
```css
* { box-sizing: border-box; }
body { margin: 0; padding: 9px 9px 0 6px; background: #fff; font: 9px/12px "Liberation Sans", Arial, sans-serif; color: #222; }
.sprite { position: absolute; width: 0; height: 0; }
button { display: flex; align-items: center; justify-content: center; margin: 0; padding: 0; border: 0; background: none; font: inherit; color: inherit; }
i { display: block; flex: none; }
h2 { margin: 0; font: inherit; }
.fill { flex: 1; }
.app { background: #bcd5fb; }

.ribbon { display: flex; height: 52px; background: linear-gradient(#b7d3f8 0, #abcbf5 45%, #9cc0ef 60%, #9fc3f1 85%, #8fb4e4 100%); }
.group { display: flex; flex-direction: column; align-items: center; justify-content: space-between; padding: 3px 0 3px; border-right: 1px solid #c4dbf8; color: #37379a; font: bold 10px/14px Lato, "Open Sans", sans-serif; white-space: nowrap; }
.group .icons { display: flex; align-items: center; height: 30px; }
.group button, .group svg { width: 26px; height: 28px; }
.g-open { width: 49px; } .g-profiles { width: 50px; } .g-record { width: 59px; } .g-peak { width: 113px; }
.g-interpret { width: 184px; } .g-analysis { width: 156px; } .g-database { width: 144px; } .g-report { width: 48px; } .g-sketch { width: 59px; }
.g-peak .icons { gap: 1px; }
.g-interpret .icons { gap: 1px; }
.g-database .icons { margin-right: 6px; }
.up { width: 11px; height: 3px; background: #111; clip-path: polygon(50% 0, 77% 100%, 23% 100%); }
.ico-text { font: bold 8px "Liberation Sans", Arial, sans-serif; fill: #2f6eb6; }

.toolbar, .struct-tools { display: flex; align-items: center; background: #dbe8fb; }
.toolbar { height: 29px; padding: 0 4px 0 2px; border-bottom: 1px solid #bfd5f4; background: linear-gradient(#dfebfd, #d5e4fa); }
.toolbar button, .struct-tools button { width: 26px; height: 26px; }
.toolbar svg, .struct-tools svg { width: 24px; height: 24px; }
.toolbar .wide, .toolbar .wide svg { width: 34px; }
.toolbar .on, .struct-tools .on { border: 1px solid #c4c9c5; background: #f9f7ea; }
.toolbar .pale { background: #eaf0fc; }
.red { color: #c72c45; } .gray { color: #b4b8be; } .blue { color: #2222c8; } .green { color: #0fb52b; }
.sep { width: 1px; height: 24px; margin: 0 1px; background: #c3d6f0; }
.space { width: 6px; }
.down { width: 14px; height: 6px; background: #0c0c86; clip-path: polygon(22% 0, 86% 0, 54% 100%); }
.down.off { background: #9fa4aa; }
.organizer { height: 15px; padding: 2px 11px 0; background: #dbe8fb; }

.work { display: grid; grid-template-columns: 213fr 849fr; gap: 3px; }
.panel-title { height: 13px; padding-left: 2px; border-right: 1px solid #a6c4f0; background: #cfe2fb; color: #334; }
.struct-tools { height: 31px; padding-left: 4px; padding-right: 6px; border-bottom: 1px solid #a9c6ee; }
.struct-tools .wide, .struct-tools .wide svg { width: 32px; }
.struct-tools .narrow { width: 16px; } .struct-tools .narrow svg { width: 14px; }
.struct-tools .s20 { width: 20px; height: 20px; }
.struct-tools .sep { margin: 0 4px 0 3px; }
.plot { display: block; width: 100%; height: auto; background: #fff; fill: #333; font-size: 9px; }
.mark { fill: #e0e0e0; }
.atoms { font: 9px "Liberation Serif", "Times New Roman", serif; fill: #222; }
.sub { font-size: 6px; }
.pager { display: flex; align-items: center; height: 21px; padding: 0 3px; background: #dce8f8; }
.record { flex: 1; padding-left: 1px; }
.record select { width: 40px; padding: 0; border: 0; background: none; appearance: none; font: inherit; color: inherit; }
.pager button { width: 18px; height: 18px; } .pager svg { width: 12px; height: 12px; }
.pager .sep { margin: 0 1px; height: 18px; }
.mini { width: 4px; height: 2px; background: #222; clip-path: polygon(0 0, 100% 0, 50% 100%); margin: 0 5px; }

.tabs { display: flex; align-items: flex-end; height: 18px; padding-left: 21px; background: linear-gradient(90deg, #8d9dbd, #aab4cf 45%, #bbb 100%); }
.tab { gap: 12px; width: 220px; height: 15px; background: linear-gradient(#ffdba4, #ffc06c 50%, #ffd69b); font: bold 11px/15px "Liberation Sans", Arial, sans-serif; color: #111; }
.tab-ico { width: 8px; height: 8px; border: 2px solid #a11; background: #e99; }
.tab-menu { width: 16px; height: 15px; background: #b9daf9; }
.fit { width: 14px; height: 15px; background: #bdd7f5; }
.fit svg { width: 14px; height: 14px; }
.chrom { position: relative; margin-top: 1px; border: 2px solid #fbe694; }
.steps { position: absolute; top: 0; right: 0; display: flex; justify-content: space-around; width: 60px; height: 17px; padding: 0 1px; background: #d7e6fb; }
.chrom .steps { top: -1px; right: -2px; }
.steps button { width: 14px; } .steps svg { width: 12px; height: 12px; }
.trace path { fill: none; stroke-width: 1; stroke-linejoin: round; }
.cursor { fill: none; stroke: #f03c3c; stroke-width: 1; }
.bold { font-size: 11px; font-weight: bold; fill: #111; }
.red-label { font-weight: bold; fill: #d22; }
.axis path { fill: none; stroke: #777; }
.axis text, .scale { fill: #555; font-size: 9px; }
.spectra { display: grid; grid-template-columns: 373fr 236fr 234fr; gap: 3px; margin-top: 4px; }
.spectrum { position: relative; }
.peak { fill: #2c2ccc; }
.leader { fill: none; stroke: #a9b4ec; }
.callout { fill: #fff; stroke: #555; }
.tiny { font-size: 6px; }

.components { display: flex; height: 99px; margin-top: 2px; background: #c3dafc; }
.side { display: flex; align-items: center; justify-content: center; width: 14px; height: 97px; margin: 1px 0; border: 1px solid #a9c6ee; }
.side span { writing-mode: vertical-rl; transform: rotate(180deg); white-space: nowrap; }
.grid-wrap { flex: 1; min-width: 0; padding-top: 1px; }
.grid-view { display: flex; height: 84px; overflow: hidden; }
table { flex: 1; width: 100%; min-width: 0; height: 84px; border-collapse: collapse; table-layout: fixed; background: #fff; }
.w25 { width: 25px; } .w33 { width: 33px; } .w39 { width: 39px; } .w50 { width: 50px; } .w66 { width: 66px; }
.w83 { width: 83px; } .w84 { width: 84px; } .w117 { width: 117px; } .w124 { width: 124px; }
th, td { padding: 0; overflow: hidden; border-right: 1px solid #dde4ee; text-align: center; white-space: nowrap; }
th { height: 15px; background: #bfdcff; border-color: #a9c8f0; font-weight: normal; color: #223; }
td { height: 59px; border-bottom: 1px solid #d5dae2; }
.next td { height: 10px; background: #f0f4fa; }
.cut { padding-left: 15px; border-right: 0; text-align: left; }
.far { padding-left: 28px; }
input[type="checkbox"] { display: block; position: relative; appearance: none; width: 11px; height: 11px; margin: 0 auto; border: 1px solid #c0d3f2; background: #fff; }
input[type="checkbox"]:checked::after { content: ""; position: absolute; left: 3px; top: 0; width: 3px; height: 6px; border: solid #111; border-width: 0 2px 2px 0; transform: rotate(40deg); }
.formula { font-size: 12px; } .formula sub { font-size: 8px; line-height: 1; vertical-align: -3px; }
.thumb svg { display: block; width: 100%; height: 57px; border: 1px solid #bbb; }
.match { vertical-align: top; padding: 1px 2px; }
.match span { display: grid; place-items: center; height: 55px; background: #0a9c0a; color: #053605; }
.next .match span { height: 7px; background: #078207; }
.ms { vertical-align: top; }
.ms .head { font-size: 7px; }
.next .peek { padding-left: 5px; text-align: left; font-size: 7px; line-height: 8px; }
.vbar { display: flex; flex-direction: column; width: 14px; background: #f0f0f0; }
.hbar { display: flex; align-items: center; height: 14px; background: #efefef; padding-right: 18px; }
.thumb-v { height: 14px; background: #cdcdcd; margin: 0 1px; }
.thumb-h { width: 14px; height: 13px; background: #cdcdcd; }
.chev { width: 14px; height: 14px; display: grid; place-items: center; }
.chev::before { content: ""; width: 5px; height: 5px; border: solid #444; border-width: 1px 0 0 1px; }
.up-chev { background: #c3dafc; height: 15px; } .up-chev::before { transform: rotate(45deg); } .down-chev::before { transform: rotate(225deg); }
.left-chev::before { transform: rotate(-45deg); } .right-chev::before { transform: rotate(135deg); }

.status { display: flex; align-items: center; gap: 12px; height: 17px; padding: 0 4px; border-top: 1px solid #a9c3ea; border-bottom: 1px solid #8898b0; background: linear-gradient(#eef4fd, #d9e5f7); white-space: nowrap; }
.status sub { font-size: 8px; line-height: 1; vertical-align: -1px; }
.unit { width: 18px; height: 12px; font-size: 6px; }
.unit.active { margin-right: -6px; border: 1px solid #b9b69d; background: #fbf7df; }
.status .unit + .unit { margin-left: 0; }
.status label { margin-right: -10px; }
.spin { display: flex; align-items: center; width: 40px; height: 14px; border: 1px solid #9ba9bd; background: #fff; }
.spin input { width: 27px; padding: 0 0 0 1px; border: 0; background: none; font: inherit; }
.spin svg { width: 10px; height: 12px; }

.caption { margin: 42px 3px 0 0; text-align: center; font: 300 27px/35px "Noto Sans CJK SC", sans-serif; color: #111; }
.caption span { display: inline-block; padding: 0 6px 0 1px; background: #d3d3d3; }
```
FILE: axes.js
```js
const axes = {
  chrom: { scale: 81, zero: 240, start: -0.15, max: 10.2, step: 0.05, mid: 5, major: 10, labelTo: 9, y: 309.5, from: 224, to: 1068, text: 322, digits: 1 },
  component: { scale: 0.354, zero: 222, start: 10, max: 1040, step: 10, mid: 5, major: 10, labelTo: 900, y: 440.5, from: 223, to: 593, text: 452, digits: 0 },
  ms: { scale: 0.234, zero: 592, start: 40, max: 1020, step: 20, mid: 5, major: 10, labelTo: 800, y: 440.5, from: 598, to: 833, text: 452, digits: 0 },
  ms2: { scale: 0.233, zero: 831, start: 40, max: 1020, step: 20, mid: 5, major: 10, labelTo: 800, y: 440.5, from: 838, to: 1070, text: 452, digits: 0 }
};

const NS = "http://www.w3.org/2000/svg";

document.querySelectorAll("[data-axis]").forEach((group) => {
  const a = axes[group.dataset.axis];
  let d = `M${a.from} ${a.y}H${a.to}`;
  if (a.y > 400) d += `M${a.from} 436.5H${a.to}`;
  for (let n = Math.round(a.start / a.step); n * a.step <= a.max; n += 1) {
    const value = n * a.step;
    const x = a.zero + value * a.scale;
    const major = n % a.major === 0;
    d += `M${x.toFixed(1)} ${a.y}v${major ? 5 : n % a.mid === 0 ? 4 : 2}`;
    if (major && value >= 0 && value <= a.labelTo + 0.01) {
      const label = document.createElementNS(NS, "text");
      label.setAttribute("x", x.toFixed(1));
      label.setAttribute("y", a.text);
      label.setAttribute("text-anchor", "middle");
      label.textContent = n === 0 ? "0" : value.toFixed(a.digits);
      group.append(label);
    }
  }
  const path = document.createElementNS(NS, "path");
  path.setAttribute("d", d);
  group.prepend(path);
});
```
